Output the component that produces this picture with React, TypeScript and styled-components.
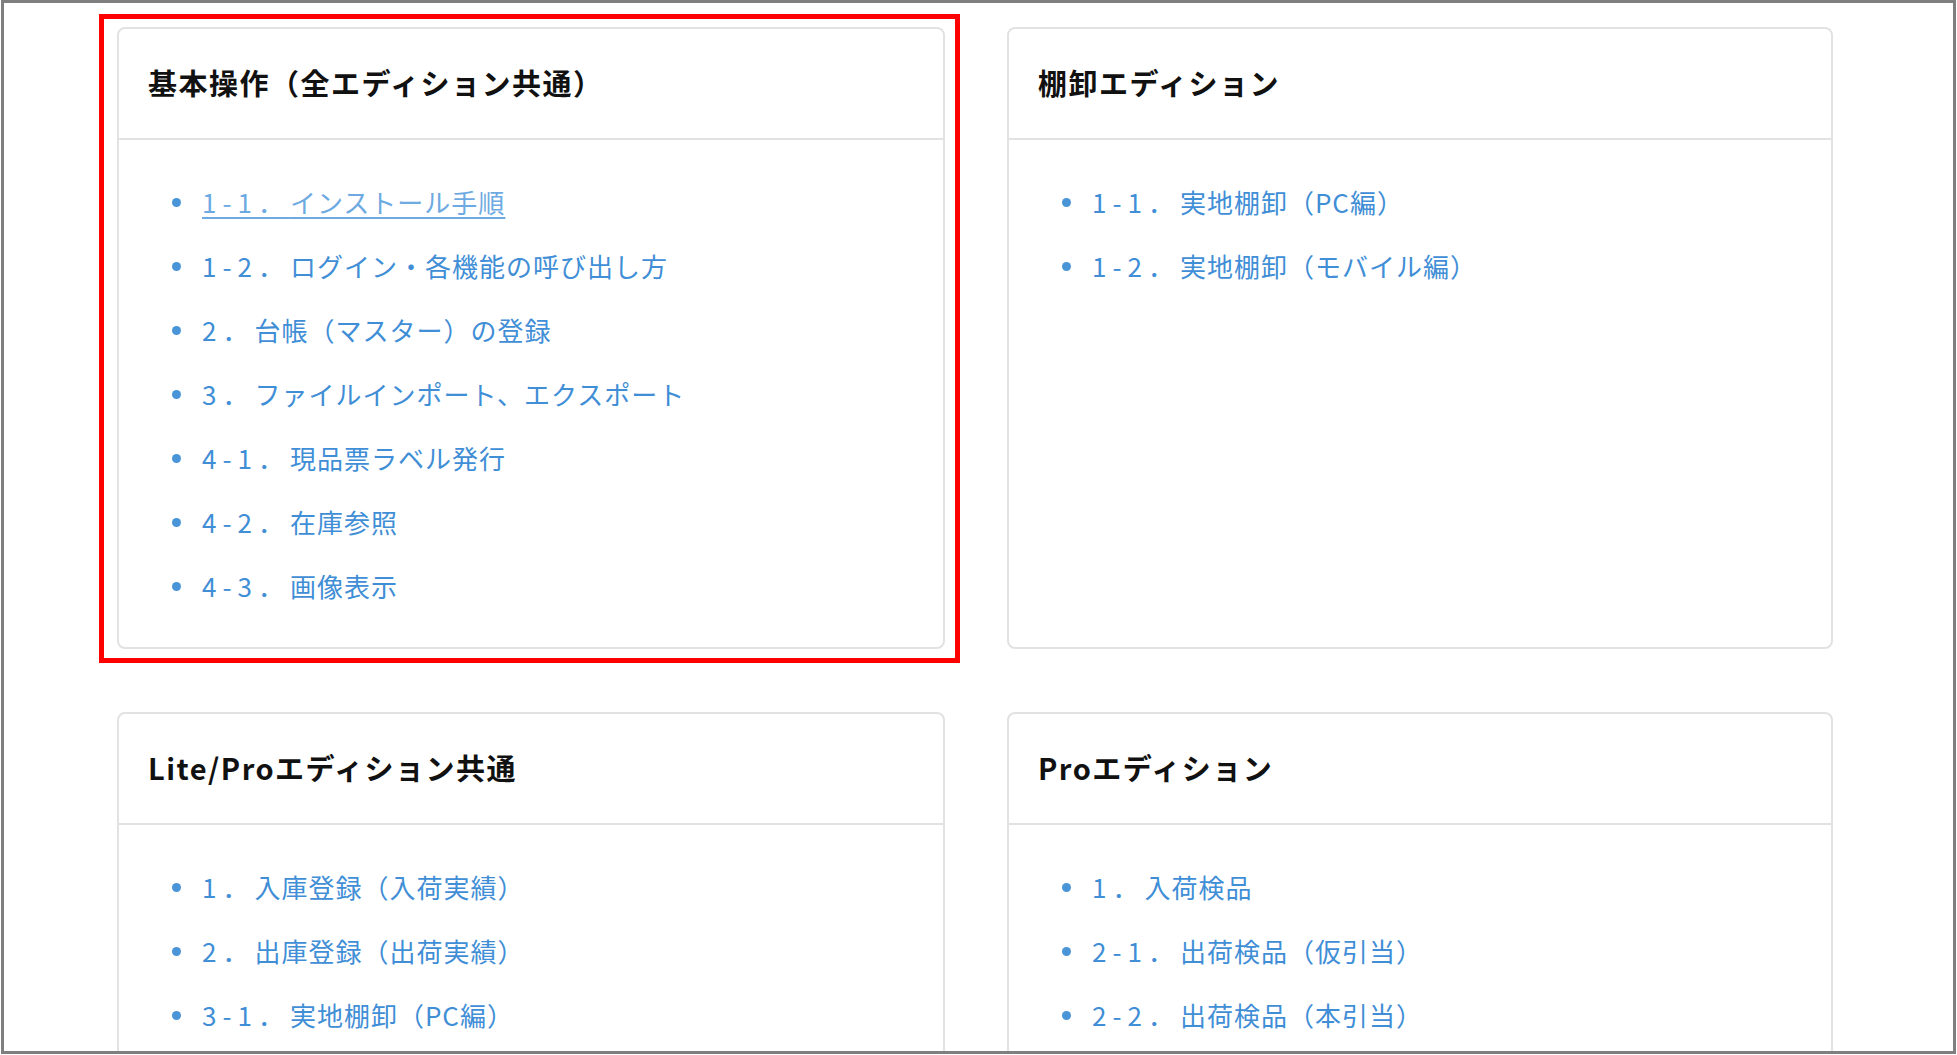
import React from "react";
import styled, { createGlobalStyle } from "styled-components";

const GlobalStyle = createGlobalStyle`
  html, body {
    margin: 0;
    padding: 0;
    background: #ffffff;
  }
  body {
    font-family: "Noto Sans CJK JP", "Noto Sans", sans-serif;
  }
`;

type Manual = {
  title: string;
  items: string[];
  highlight?: boolean;
};

// マニュアル一覧
const manuals: Manual[] = [
  {
    title: "基本操作（全エディション共通）",
    items: [
      "1-1．インストール手順",
      "1-2．ログイン・各機能の呼び出し方",
      "2．台帳（マスター）の登録",
      "3．ファイルインポート、エクスポート",
      "4-1．現品票ラベル発行",
      "4-2．在庫参照",
      "4-3．画像表示",
    ],
    highlight: true,
  },
  {
    title: "棚卸エディション",
    items: ["1-1．実地棚卸（PC編）", "1-2．実地棚卸（モバイル編）"],
  },
  {
    title: "Lite/Proエディション共通",
    items: [
      "1．入庫登録（入荷実績）",
      "2．出庫登録（出荷実績）",
      "3-1．実地棚卸（PC編）",
    ],
  },
  {
    title: "Proエディション",
    items: ["1．入荷検品", "2-1．出荷検品（仮引当）", "2-2．出荷検品（本引当）"],
  },
];

// 番号部分（「1-1．」）と本文を分ける
const splitItem = (text: string) => {
  const idx = text.indexOf("．");
  return [text.slice(0, idx + 1), text.slice(idx + 1)];
};

function App() {
  return (
    <>
      <GlobalStyle />
      <Frame>
        <CardGrid>
          {manuals.map((m) => (
            <Card key={m.title} highlight={m.highlight}>
              <CardHeader>
                <CardTitle>{m.title}</CardTitle>
              </CardHeader>
              <CardBody>
                <LinkList>
                  {m.items.map((item, i) => {
                    const [num, label] = splitItem(item);
                    return (
                      <LinkItem key={item}>
                        <ManualLink href="#" visited={m.highlight && i === 0}>
                          <ItemNumber>{num}</ItemNumber>
                          {label}
                        </ManualLink>
                      </LinkItem>
                    );
                  })}
                </LinkList>
              </CardBody>
            </Card>
          ))}
        </CardGrid>
      </Frame>
    </>
  );
}

export default App;

const Frame = styled.div`
  box-sizing: border-box;
  margin: 0 1px;
  height: 1054px;
  border: 3px solid #7f7f7f;
  overflow: hidden;
  padding: 24px 0 0 113px;
`;

const CardGrid = styled.div`
  display: grid;
  grid-template-columns: 828px 826px;
  column-gap: 62px;
  row-gap: 63px;
  align-items: stretch;
`;

const Card = styled.section<{ highlight?: boolean }>`
  position: relative;
  border: 2px solid #e2e2e2;
  border-radius: 8px;
  background: #fff;

  ${(props) =>
    props.highlight &&
    `
    &::before {
      content: "";
      position: absolute;
      top: -15px;
      left: -20px;
      right: -17px;
      bottom: -16px;
      border: 5px solid #ff0000;
      pointer-events: none;
    }
  `}
`;

const CardHeader = styled.div`
  box-sizing: border-box;
  height: 111px;
  display: flex;
  align-items: center;
  padding: 0 0 3px 29px;
  border-bottom: 2px solid #e2e2e2;
`;

const CardTitle = styled.h2`
  margin: 0;
  font-size: 29px;
  font-weight: 700;
  letter-spacing: 1.5px;
  color: #111;
`;

const CardBody = styled.div`
  padding: 42px 0 41px 53px;
`;

const LinkList = styled.ul`
  list-style: none;
  margin: 0;
  padding: 0;
`;

const LinkItem = styled.li`
  display: flex;
  align-items: center;
  height: 40px;
  margin-bottom: 24px;

  &:last-child {
    margin-bottom: 0;
  }

  &::before {
    content: "";
    flex: none;
    width: 9px;
    height: 9px;
    border-radius: 50%;
    background: #4a94d8;
    margin-right: 21px;
  }
`;

const ManualLink = styled.a<{ visited?: boolean }>`
  font-size: 26px;
  letter-spacing: 1px;
  line-height: 40px;
  color: ${(props) => (props.visited ? "#6eaae2" : "#3f8ed6")};
  text-decoration: ${(props) => (props.visited ? "underline" : "none")};
  text-decoration-thickness: 2px;
  text-underline-offset: 4px;
`;

const ItemNumber = styled.span`
  letter-spacing: 6px;
`;
